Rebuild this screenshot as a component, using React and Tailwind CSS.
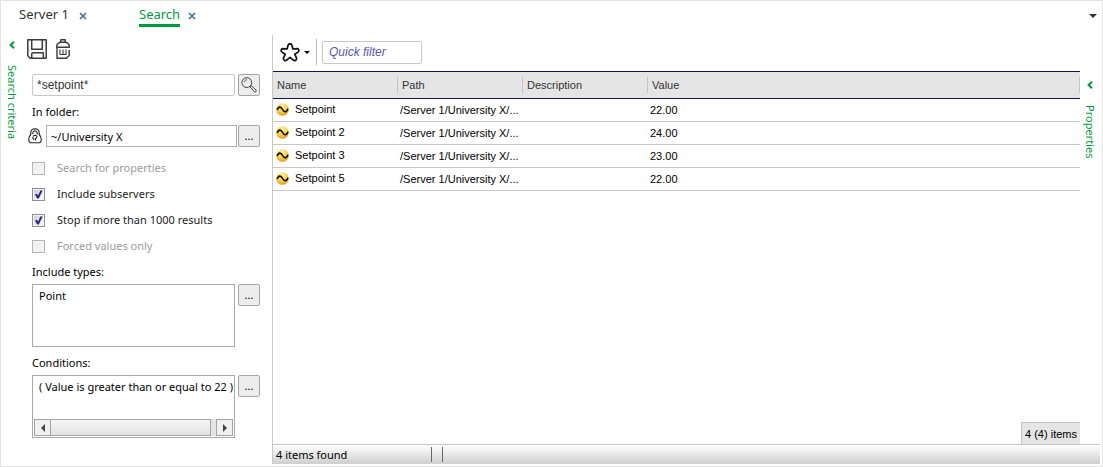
import React from "react";

const ROWS = [
  { name: "Setpoint", path: "/Server 1/University X/...", value: "22.00" },
  { name: "Setpoint 2", path: "/Server 1/University X/...", value: "24.00" },
  { name: "Setpoint 3", path: "/Server 1/University X/...", value: "23.00" },
  { name: "Setpoint 5", path: "/Server 1/University X/...", value: "22.00" },
];

const OPTIONS = [
  { id: "props", label: "Search for properties", checked: false, disabled: true },
  { id: "subs", label: "Include subservers", checked: true, disabled: false },
  { id: "stop", label: "Stop if more than 1000 results", checked: true, disabled: false },
  { id: "forced", label: "Forced values only", checked: false, disabled: true },
];

function CloseIcon() {
  return (
    <svg width="8" height="8" viewBox="0 0 8 8" fill="none" stroke="#41719c" strokeWidth="1.6">
      <path d="M1 1l6 6M7 1l-6 6" />
    </svg>
  );
}

function Chevron() {
  return (
    <svg width="6" height="8" viewBox="0 0 6 8" fill="none" stroke="#009a3d" strokeWidth="2">
      <path d="M5 0.8L1.6 4L5 7.2" />
    </svg>
  );
}

function SaveIcon() {
  return (
    <svg width="20" height="20" viewBox="0 0 20 20" fill="none" stroke="#3a3a3a" strokeWidth="1.5" strokeLinejoin="round">
      <path d="M0.8 0.8H19.2V19.2H3.2L0.8 16.8Z" />
      <path d="M4.7 1V10.3H15.3V1M4.7 19V15.2Q4.7 13.7 6.2 13.7H16.3V19" />
    </svg>
  );
}

function TrashIcon() {
  return (
    <svg width="14" height="20" viewBox="0 0 14 20" fill="none" stroke="#3a3a3a" strokeWidth="1.4" strokeLinejoin="round">
      <path d="M4.8 3V0.8H9.2V3M0.8 8.3V6.5Q0.8 5.3 2 4.7L4.2 3.2H9.8L12 4.7Q13.2 5.3 13.2 6.5V8.3Z" />
      <path d="M1 8.5V19.2H10.5L13.2 16.5V11" />
      <path d="M4 10.5V15.2M7 10.5V15.2M10 10.5V15.2" strokeWidth="1.1" />
      <path d="M3.5 15.5H10.5" strokeWidth="1" />
    </svg>
  );
}

function SearchIcon() {
  return (
    <svg width="16" height="16" viewBox="0 0 16 16" fill="none" stroke="#444" strokeWidth="1">
      <circle cx="5.8" cy="5.6" r="4.9" />
      <path d="M3 5.2Q3.6 2.8 6 2.6" strokeWidth="0.8" />
      <path d="M9 9.8L13.4 14.8Q14.2 15.4 15 14.6Q15.6 13.8 15 13L10.2 8.6" />
      <path d="M9.2 9.8L10.3 8.7" />
    </svg>
  );
}

function LockIcon() {
  return (
    <svg width="14" height="16" viewBox="0 0 14 16" fill="none" stroke="#222" strokeWidth="1.1" strokeLinejoin="round">
      <path d="M2.8 6.5V4.5Q3 0.8 7 0.7Q11 0.8 11.2 4.5V6.5Q13.3 8.5 13.3 11.5Q13.2 14 11.8 14.8H2.2Q0.8 14 0.7 11.5Q0.7 8.5 2.8 6.5Z" />
      <path d="M4.8 6.3V4.8Q5 2.8 7 2.7Q9 2.8 9.2 4.8V6.5" />
      <path d="M5.1 8.8Q5.3 7.2 7.1 7.2Q9 7.4 8.9 8.8Q8.8 9.8 7.6 10.5V12.4" />
      <path d="M4.4 9.4L6.2 12" />
    </svg>
  );
}

function StarIcon() {
  return (
    <svg width="20" height="19" viewBox="0 0 20 19" fill="none" stroke="#111" strokeWidth="1.7" strokeLinejoin="round">
      <path d="M8.2 1.8Q8.6 0.9 10 0.9Q11.4 0.9 11.8 1.8L12.9 6L17.2 5.6Q18.4 5.8 18.9 7Q19 8.2 18.2 8.9L14.8 11.3L16.6 15.2Q16.8 16.4 15.8 17.2Q14.6 17.9 13.6 17.3L10 14.3L6.4 17.3Q5.4 17.9 4.2 17.2Q3.2 16.4 3.4 15.2L5.2 11.3L1.8 8.9Q1 8.2 1.1 7Q1.6 5.8 2.8 5.6L7.1 6Z" />
    </svg>
  );
}

function PointIcon() {
  return (
    <svg className="shrink-0" width="13" height="13" viewBox="0 0 13 13" fill="none">
      <defs>
        <radialGradient id="gold" cx="0.45" cy="0.25" r="0.8">
          <stop offset="0" stopColor="#fff6b0" />
          <stop offset="0.5" stopColor="#fbd24a" />
          <stop offset="1" stopColor="#e39418" />
        </radialGradient>
      </defs>
      <circle cx="6.5" cy="6.5" r="6.3" fill="url(#gold)" />
      <path d="M1.2 7Q2 4 4 4.1Q5.2 4.3 6.5 6.4Q7.9 8.8 9.2 8.8Q11 8.7 11.9 5.8" stroke="#111" strokeWidth="1.6" />
    </svg>
  );
}

function Triangle({ className, d, w, h }) {
  return (
    <svg className={className} width={w} height={h} viewBox={`0 0 ${w} ${h}`} fill="currentColor">
      <path d={d} />
    </svg>
  );
}

function SmallButton({ label, children }) {
  return (
    <button
      type="button"
      aria-label={label}
      className="flex h-[22px] w-[22px] shrink-0 items-center justify-center rounded-xs border border-[#a5a5a5] bg-[#ededed] text-[11px] leading-4 text-black"
    >
      {children}
    </button>
  );
}

function SideStrip({ children }) {
  return (
    <button type="button" className="flex shrink-0 flex-col items-center self-start text-[11px] leading-4 text-[#009a3d]">
      <Chevron />
      <span className="mt-4 [writing-mode:vertical-rl]">{children}</span>
    </button>
  );
}

function Criteria() {
  return (
    <form className="flex flex-1 flex-col pl-2 pr-3 text-[11px] leading-4 text-black" onSubmit={(e) => e.preventDefault()}>
      <div className="-ml-[5px] flex h-[39px] items-start gap-[9px] pt-1">
        <button type="button" aria-label="Save"><SaveIcon /></button>
        <button type="button" aria-label="Delete"><TrashIcon /></button>
      </div>

      <div className="flex gap-[3px]">
        <input
          aria-label="Search text"
          defaultValue="*setpoint*"
          className="h-[22px] min-w-0 flex-1 rounded-xs border border-[#c8c8c8] px-1 font-['Liberation_Sans',sans-serif] text-xs text-[#333]"
        />
        <SmallButton label="Search"><SearchIcon /></SmallButton>
      </div>

      <label htmlFor="folder" className="mt-2 block">In folder:</label>
      <div className="-ml-1 mt-[5px] flex items-center gap-px">
        <LockIcon />
        <input
          id="folder"
          defaultValue="~/University X"
          className="ml-[3px] h-[22px] min-w-0 flex-1 border border-[#b0b0b4] px-1 text-[11px]"
        />
        <SmallButton label="Browse folder">...</SmallButton>
      </div>

      <div className="mt-2 flex flex-col">
        {OPTIONS.map((o) => (
          <label key={o.id} className={o.disabled ? "flex h-[26px] items-center gap-3 text-[#9b9b9b]" : "flex h-[26px] items-center gap-3 text-[#222]"}>
            <span className="relative flex">
              <input
                type="checkbox"
                defaultChecked={o.checked}
                disabled={o.disabled}
                className="peer h-[13px] w-[13px] appearance-none border border-[#8e8f8f] bg-linear-to-br from-[#c8cbd6] to-white shadow-[inset_0_0_0_1px_#f4f4f4] disabled:border-[#b5b5b5] disabled:from-[#efefef] disabled:to-[#f4f4f4]"
              />
              <svg className="pointer-events-none absolute inset-0 hidden peer-checked:block" width="13" height="13" viewBox="0 0 13 13">
                <path d="M3 6.2L5 5.8L6 7.8L8.4 2.4H10.6L6.8 10.6H5.2Z" fill="#272772" />
              </svg>
            </span>
            {o.label}
          </label>
        ))}
      </div>

      <h2 className="mt-[5px]" id="types">Include types:</h2>
      <div className="mt-1 flex gap-[3px]">
        <ul aria-labelledby="types" className="h-[63px] min-w-0 flex-1 border border-[#a9a9ae] px-1.5 pt-[3px]">
          <li>Point</li>
        </ul>
        <SmallButton label="Choose types">...</SmallButton>
      </div>

      <h2 className="mt-2" id="conditions">Conditions:</h2>
      <div className="mt-1 flex gap-[3px]">
        <div className="flex h-[63px] min-w-0 flex-1 flex-col justify-between border border-[#a9a9ae] p-px">
          <ul aria-labelledby="conditions" className="overflow-hidden pl-[5px] pt-[2px] whitespace-nowrap">
            <li>( Value is greater than or equal to 22 )</li>
          </ul>
          <div className="flex h-[17px] bg-[#e4e4e4] text-[#444]">
            <button type="button" aria-label="Scroll left" className="flex w-[17px] items-center justify-center border border-[#a3a3a3] bg-[#f0f0f0]">
              <Triangle w={4} h={8} d="M4 0V8L0 4Z" />
            </button>
            <div className="mr-[5px] flex-1 border border-l-0 border-[#a3a3a3] bg-linear-to-b from-[#f6f6f6] to-[#e2e2e2]" />
            <button type="button" aria-label="Scroll right" className="flex w-[17px] items-center justify-center border border-[#a3a3a3] bg-[#f0f0f0]">
              <Triangle w={4} h={8} d="M0 0V8L4 4Z" />
            </button>
          </div>
        </div>
        <SmallButton label="Edit conditions">...</SmallButton>
      </div>
    </form>
  );
}

function HeadCell({ children }) {
  return (
    <th className="p-0 font-normal">
      <div className="flex h-4 items-center border-r border-[#c4c4c4] pl-1">{children}</div>
    </th>
  );
}

function Results() {
  return (
    <div className="flex min-w-0 flex-1 flex-col font-['Liberation_Sans',sans-serif] text-[11px] leading-4 text-black">
      <div className="flex h-9 items-center pb-[2px] pl-[7px]">
        <button type="button" aria-label="Favorites" className="flex items-center gap-1">
          <StarIcon />
          <Triangle w={6} h={3} d="M0 0H6L3 3Z" />
        </button>
        <div className="ml-1.5 h-[26px] w-px bg-[#b5bbc2]" />
        <input
          aria-label="Quick filter"
          placeholder="Quick filter"
          className="ml-[5px] h-[23px] w-[100px] rounded-xs border border-[#c8c8c8] px-1.5 text-xs italic placeholder:text-[#5555ad]"
        />
      </div>
      <table className="w-full table-fixed border-collapse text-left">
        <colgroup>
          <col className="w-[125px]" />
          <col className="w-[125px]" />
          <col className="w-[125px]" />
          <col />
        </colgroup>
        <thead>
          <tr className="h-[27px] border-y border-[#14144f] bg-[#e5e5e5] text-[#333]">
            <HeadCell>Name</HeadCell>
            <HeadCell>Path</HeadCell>
            <HeadCell>Description</HeadCell>
            <HeadCell>Value</HeadCell>
          </tr>
        </thead>
        <tbody>
          {ROWS.map((r) => (
            <tr key={r.name} className="h-[23px] border-b border-[#c8c8c8]">
              <td className="p-0 pb-[2px]">
                <div className="flex items-center gap-1.5 pl-[3px]"><PointIcon />{r.name}</div>
              </td>
              <td className="p-0 pl-[2px] whitespace-nowrap">{r.path}</td>
              <td className="p-0" />
              <td className="p-0 pl-[2px]">{r.value}</td>
            </tr>
          ))}
        </tbody>
      </table>
      <div className="mt-auto flex h-[22px] items-center self-end border-l border-t border-[#c4c4c4] bg-[#e5e5e5] px-[3px]">4 (4) items</div>
    </div>
  );
}

export default function App() {
  return (
    <div className="flex min-h-screen flex-col border border-[#e3e3e3] bg-white pb-[2px] font-['Noto_Sans','Open_Sans',sans-serif]">
      <nav className="flex h-[34px] items-start pl-[18px] pr-[5px] pt-1 text-[13px] leading-[18px]">
        <div className="flex w-[120px] items-center gap-2.5">
          <a href="#server" className="border-b-3 border-transparent text-[#333]">Server 1</a>
          <button type="button" aria-label="Close Server 1"><CloseIcon /></button>
        </div>
        <div className="flex items-center gap-2">
          <a href="#search" className="border-b-3 border-[#009a3d] pb-px text-[#009a3d]">Search</a>
          <button type="button" aria-label="Close Search"><CloseIcon /></button>
        </div>
        <button type="button" aria-label="Tab list" className="ml-auto mt-[9px] text-[#333]">
          <Triangle w={8} h={4} d="M0 0H8L4 4Z" />
        </button>
      </nav>

      <main className="flex flex-1">
        <aside className="flex w-[271px] shrink-0">
          <div className="flex w-[23px] pl-[3px] pt-[6px]">
            <SideStrip>Search criteria</SideStrip>
          </div>
          <Criteria />
        </aside>
        <section className="flex min-w-0 flex-1 flex-col border-l border-[#c8c8c8]">
          <div className="flex flex-1">
            <Results />
            <div className="w-[22px] pl-[2px] pt-[46px]">
              <SideStrip>Properties</SideStrip>
            </div>
          </div>
          <footer className="mr-[2px] flex h-5 items-center border-t border-[#c4c4c4] bg-linear-to-b from-white to-[#cfcfcf] pl-[3px] text-[11px] leading-4 text-black">
            <span className="w-[155px]">4 items found</span>
            <div className="flex h-[15px] w-3 border-x border-[#666]" />
          </footer>
        </section>
      </main>
    </div>
  );
}
